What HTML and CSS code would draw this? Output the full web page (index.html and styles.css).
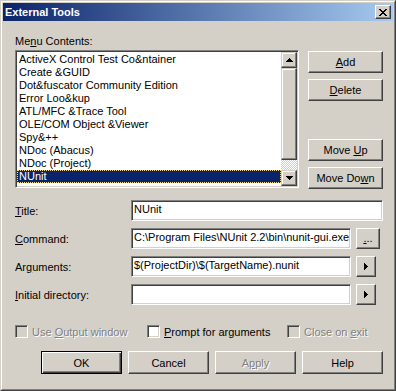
FILE: index.html
```html
<!DOCTYPE html>
<html lang="en">
<head>
    <meta charset="UTF-8">
    <title>External Tools</title>
    <link rel="stylesheet" href="styles.css">
</head>
<body>
    <div class="window">
        <div class="frame">
            <div class="titlebar">
                <span class="title">External Tools</span>
                <button class="btn close" aria-label="Close">
                    <svg width="8" height="7" viewBox="0 0 8 7" shape-rendering="crispEdges"><path d="M0 0h2v1h-2z M6 0h2v1h-2z M1 1h2v1h-2z M5 1h2v1h-2z M2 2h4v1h-4z M3 3h2v1h-2z M2 4h4v1h-4z M1 5h2v1h-2z M5 5h2v1h-2z M0 6h2v1h-2z M6 6h2v1h-2z" fill="#000"/></svg>
                </button>
            </div>

            <div class="content">
                <div class="top">
                    <div class="menu">
                        <div class="label">Me<u>n</u>u Contents:</div>
                        <div class="listbox">
                            <ul class="items">
                                <li>ActiveX Control Test Co&amp;ntainer</li>
                                <li>Create &amp;GUID</li>
                                <li>Dot&amp;fuscator Community Edition</li>
                                <li>Error Loo&amp;kup</li>
                                <li>ATL/MFC &amp;Trace Tool</li>
                                <li>OLE/COM Object &amp;Viewer</li>
                                <li>Spy&amp;++</li>
                                <li>NDoc (Abacus)</li>
                                <li>NDoc (Project)</li>
                                <li class="selected">NUnit</li>
                            </ul>
                            <div class="scrollbar">
                                <div class="sb-btn">
                                    <svg width="7" height="4" viewBox="0 0 7 4" shape-rendering="crispEdges"><path d="M3 0h1v1h-1z M2 1h3v1h-3z M1 2h5v1h-5z M0 3h7v1h-7z" fill="#000"/></svg>
                                </div>
                                <div class="sb-thumb"></div>
                                <div class="sb-track"></div>
                                <div class="sb-btn">
                                    <svg width="7" height="4" viewBox="0 0 7 4" shape-rendering="crispEdges"><path d="M0 0h7v1h-7z M1 1h5v1h-5z M2 2h3v1h-3z M3 3h1v1h-1z" fill="#000"/></svg>
                                </div>
                            </div>
                        </div>
                    </div>

                    <div class="side">
                        <button class="btn"><span><u>A</u>dd</span></button>
                        <button class="btn"><span><u>D</u>elete</span></button>
                        <button class="btn move-up"><span>Move <u>U</u>p</span></button>
                        <button class="btn"><span>Move Do<u>w</u>n</span></button>
                    </div>
                </div>

                <div class="fields">
                    <div class="field-label"><span><u>T</u>itle:</span></div>
                    <div class="field-row">
                        <div class="input wide">NUnit</div>
                    </div>

                    <div class="field-label"><span><u>C</u>ommand:</span></div>
                    <div class="field-row">
                        <div class="input">C:\Program Files\NUnit 2.2\bin\nunit-gui.exe</div>
                        <button class="btn browse"><span><u>.</u>..</span></button>
                    </div>

                    <div class="field-label"><span>Ar<u>g</u>uments:</span></div>
                    <div class="field-row">
                        <div class="input">$(ProjectDir)\$(TargetName).nunit</div>
                        <button class="btn arrow">
                            <svg width="4" height="7" viewBox="0 0 4 7" shape-rendering="crispEdges"><path d="M0 0h1v7h-1z M1 1h1v5h-1z M2 2h1v3h-1z M3 3h1v1h-1z" fill="#000"/></svg>
                        </button>
                    </div>

                    <div class="field-label"><span><u>I</u>nitial directory:</span></div>
                    <div class="field-row">
                        <div class="input"></div>
                        <button class="btn arrow">
                            <svg width="4" height="7" viewBox="0 0 4 7" shape-rendering="crispEdges"><path d="M0 0h1v7h-1z M1 1h1v5h-1z M2 2h1v3h-1z M3 3h1v1h-1z" fill="#000"/></svg>
                        </button>
                    </div>
                </div>

                <div class="options">
                    <label class="check check-output disabled"><span class="box"></span><span>Use <u>O</u>utput window</span></label>
                    <label class="check check-prompt"><span class="box"></span><span><u>P</u>rompt for arguments</span></label>
                    <label class="check disabled"><span class="box"></span><span>Close on <u>e</u>xit</span></label>
                </div>

                <div class="actions">
                    <button class="btn default">OK</button>
                    <button class="btn">Cancel</button>
                    <button class="btn disabled"><span>A<u>p</u>ply</span></button>
                    <button class="btn">Help</button>
                </div>
            </div>
        </div>
    </div>
</body>
</html>
```

FILE: styles.css
```css
* { margin: 0; padding: 0; box-sizing: border-box; }
body {
    font-family: 'Liberation Sans', Arial, sans-serif;
    font-size: 11px;
    color: #000;
    background: #d4d0c8;
}
u { text-underline-offset: 1px; }

/* window frame */
.window {
    width: 396px;
    height: 391px;
    border: 1px solid;
    border-color: #d4d0c8 #404040 #404040 #d4d0c8;
}
.frame {
    height: 100%;
    border: 1px solid;
    border-color: #fff #808080 #808080 #fff;
    padding: 1px;
    display: flex;
    flex-direction: column;
}
.titlebar {
    height: 18px;
    flex-shrink: 0;
    display: flex;
    align-items: center;
    justify-content: space-between;
    padding: 0 2px;
    background: linear-gradient(to right, #0a246a, #a6caf0);
    color: #fff;
    font-weight: bold;
}
.title { line-height: 18px; }

/* raised 3d button */
.btn {
    display: flex;
    align-items: center;
    justify-content: center;
    font: inherit;
    color: #000;
    background: #d4d0c8;
    border: 1px solid;
    border-color: #fff #404040 #404040 #fff;
    box-shadow: inset -1px -1px #808080, inset 1px 1px #d4d0c8;
    white-space: nowrap;
}
.btn.default {
    border: 1px solid #000;
    box-shadow: inset 1px 1px #fff, inset -1px -1px #404040, inset -2px -2px #808080;
}
.btn.disabled, .check.disabled {
    color: #808080;
    text-shadow: 1px 1px #fff;
}
.close {
    width: 16px;
    height: 14px;
}

.content {
    flex: 1;
    padding: 14px 10px 0 12px;
}

/* menu list */
.top {
    display: flex;
    gap: 9px;
    height: 154px;
}
.menu { width: 284px; }
.label {
    height: 13px;
    line-height: 13px;
    margin-bottom: 2px;
}
.listbox {
    height: 138px;
    display: flex;
    border: 1px solid;
    border-color: #808080 #fff #fff #808080;
    box-shadow: inset 1px 1px #404040, inset -1px -1px #d4d0c8;
    padding: 1px;
}
.items {
    flex: 1;
    list-style: none;
    background: #fff;
    padding-top: 1px;
}
.items li {
    height: 13px;
    line-height: 13px;
    padding-left: 2px;
    white-space: nowrap;
}
.items li.selected {
    background: #0a246a;
    color: #fff;
    outline: 1px dotted #f5db95;
    outline-offset: -1px;
}
.scrollbar {
    width: 16px;
    display: flex;
    flex-direction: column;
}
.sb-btn, .sb-thumb {
    background: #d4d0c8;
    border: 1px solid;
    border-color: #d4d0c8 #404040 #404040 #d4d0c8;
    box-shadow: inset -1px -1px #808080, inset 1px 1px #fff;
}
.sb-btn {
    height: 16px;
    display: flex;
    align-items: center;
    justify-content: center;
}
.sb-thumb { height: 92px; }
.sb-track {
    flex: 1;
    background: repeating-conic-gradient(#fff 0 25%, #d4d0c8 0 50%) 0 0 / 2px 2px;
}

.side {
    width: 75px;
    padding-top: 16px;
    display: flex;
    flex-direction: column;
    gap: 6px;
}
.side .btn { height: 22px; }
.side .move-up { margin-top: 32px; }

/* text fields */
.fields {
    margin-top: 11px;
    display: grid;
    grid-template-columns: 116px 1fr;
    grid-auto-rows: 21px;
    row-gap: 7px;
}
.field-label {
    display: flex;
    align-items: center;
}
.field-row {
    display: flex;
    gap: 5px;
}
.input {
    width: 220px;
    height: 21px;
    line-height: 17px;
    padding: 0 2px;
    background: #fff;
    border: 1px solid;
    border-color: #808080 #fff #fff #808080;
    box-shadow: inset 1px 1px #404040, inset -1px -1px #d4d0c8;
    white-space: nowrap;
    overflow: hidden;
}
.input.wide { width: 252px; }
.browse { width: 24px; height: 21px; align-items: flex-end; padding-bottom: 4px; }
.arrow { width: 20px; height: 21px; }

/* check boxes */
.options {
    margin-top: 20px;
    height: 13px;
    display: flex;
}
.check {
    display: flex;
    align-items: center;
    gap: 4px;
}
.check-output { width: 132px; }
.check-prompt { width: 140px; }
.box {
    width: 13px;
    height: 13px;
    background: #fff;
    border: 1px solid;
    border-color: #808080 #fff #fff #808080;
    box-shadow: inset 1px 1px #404040, inset -1px -1px #d4d0c8;
}
.check.disabled .box { background: #d4d0c8; }

.actions {
    margin-top: 13px;
    display: flex;
    justify-content: flex-end;
    gap: 6px;
}
.actions .btn {
    width: 81px;
    height: 23px;
}
```
